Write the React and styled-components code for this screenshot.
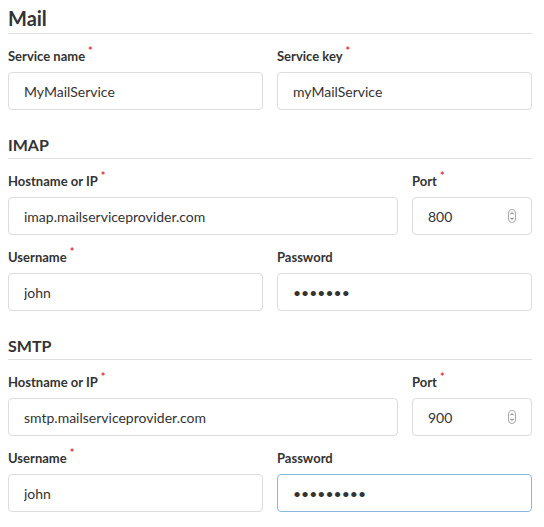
import React, { useEffect, useRef } from 'react';
import styled, { createGlobalStyle } from 'styled-components';

const GlobalStyle = createGlobalStyle`
  body {
    margin: 0;
    background: #fff;
    font-family: Lato, 'Open Sans', sans-serif;
    color: #333;
  }
`

const Page = styled.div`
  padding: 5px 12px 0 8px;
`

const Section = styled.section`
  & + & {
    margin-top: 25px;
  }
`

const Title = styled.h2`
  margin: 0 0 14px;
  font-size: ${props => props.big ? '20px' : '16px'};
  line-height: ${props => props.big ? '26px' : '20px'};
  font-weight: 700;
  color: #333;
  padding-bottom: ${props => props.big ? '2px' : '3px'};
  border-bottom: 1px solid #dedede;
`

const Rows = styled.div`
  display: flex;
  flex-direction: column;
  gap: 14px;
`

const Grid = styled.div`
  display: grid;
  grid-template-columns: ${props => props.columns || '1fr 1fr'};
  column-gap: 14px;
`

const Field = styled.div`
  display: flex;
  flex-direction: column;
  min-width: 0;
`

const Label = styled.label`
  font-size: 13px;
  line-height: 17px;
  font-weight: 700;
  color: #333;
  margin-bottom: 7px;
`

const Required = styled.span`
  color: #e0343a;
  font-size: 11px;
  line-height: 0;
  vertical-align: 6px;
  margin-left: 3px;
`

const InputBox = styled.div`
  position: relative;
`

const Input = styled.input`
  box-sizing: border-box;
  width: 100%;
  height: 38px;
  padding: 0 15px;
  border: 1px solid #dcdcdc;
  border-radius: 4px;
  font-family: Lato, 'Open Sans', sans-serif;
  font-size: 14px;
  color: #333;
  background: #fff;
  outline: none;
  &:focus {
    border-color: #86b8dc;
  }
`

const Spinner = styled.svg`
  position: absolute;
  right: 16px;
  top: 50%;
  margin-top: -7px;
  pointer-events: none;
`

function SpinIcon() {
  return (
    <Spinner width="8" height="14" viewBox="0 0 8 14">
      <rect x="0.5" y="0.5" width="7" height="13" rx="3.5" fill="#fff" stroke="#a8a8a8" />
      <path d="M2.3 5.3 L4 3.6 L5.7 5.3" fill="none" stroke="#555" strokeWidth="0.9" />
      <path d="M2.3 8.7 L4 10.4 L5.7 8.7" fill="none" stroke="#555" strokeWidth="0.9" />
    </Spinner>
  )
}

function FormField({ label, required, spinner, inputRef, ...rest }) {
  return (
    <Field>
      <Label>
        {label}
        {required && <Required>*</Required>}
      </Label>
      <InputBox>
        <Input ref={inputRef} {...rest} />
        {spinner && <SpinIcon />}
      </InputBox>
    </Field>
  )
}

function ServerSection({ title, host, port, password, focus }) {
  const ref = useRef(null)
  useEffect(() => {
    if (focus && ref.current) {
      const el = ref.current
      el.focus({ preventScroll: true })
      el.setSelectionRange(el.value.length, el.value.length)
      window.scrollTo(0, 0)
    }
  }, [focus])
  return (
    <Section>
      <Title>{title}</Title>
      <Rows>
        <Grid columns="1fr 120px">
          <FormField label="Hostname or IP" required defaultValue={host} />
          <FormField label="Port" required spinner defaultValue={port} />
        </Grid>
        <Grid>
          <FormField label="Username" required defaultValue="john" />
          <FormField label="Password" type="password" inputRef={ref} defaultValue={password} />
        </Grid>
      </Rows>
    </Section>
  )
}

export default function App() {
  return (
    <Page>
      <GlobalStyle />
      <Section>
        <Title big>Mail</Title>
        <Grid>
          <FormField label="Service name" required defaultValue="MyMailService" />
          <FormField label="Service key" required defaultValue="myMailService" />
        </Grid>
      </Section>
      <ServerSection title="IMAP" host="imap.mailserviceprovider.com" port="800" password="1234567" />
      <ServerSection title="SMTP" host="smtp.mailserviceprovider.com" port="900" password="123456789" focus />
    </Page>
  )
}
